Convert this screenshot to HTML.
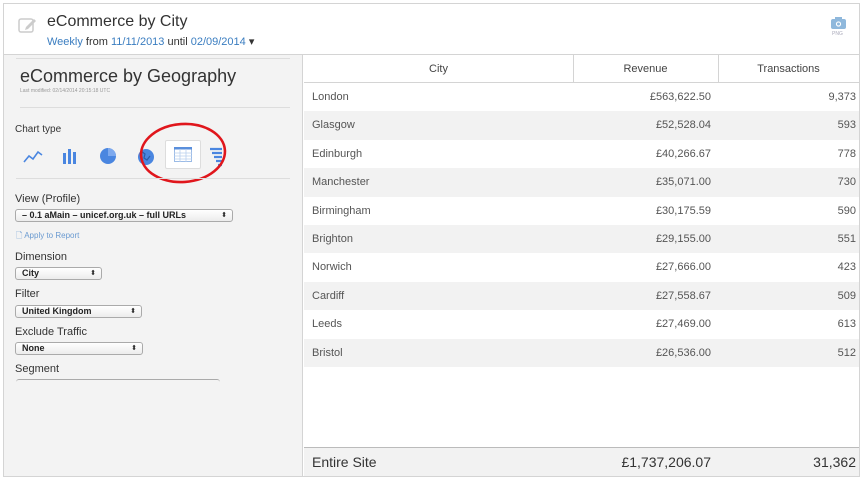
<!DOCTYPE html>
<html><head><meta charset="utf-8"><style>
*{margin:0;padding:0;box-sizing:border-box}
body{width:864px;height:481px;background:#fff;font-family:"Liberation Sans",sans-serif;position:relative;overflow:hidden;color:#333}
.frame{position:absolute;left:3px;top:3px;width:857px;height:474px;border:1px solid #d4d4d4;z-index:5;pointer-events:none}
.hdr{position:absolute;left:3px;top:3px;width:857px;height:52px;border-bottom:1px solid #d4d4d4}
.left{position:absolute;left:4px;top:55px;width:299px;height:421px;background:#f3f3f3;border-right:1px solid #d4d4d4}
.a{position:absolute;white-space:nowrap}
.blue{color:#3a7dc0}
.sel{position:absolute;height:13px;border:1px solid #aaa;border-radius:3px;background:linear-gradient(#fff,#ececec);font-size:9px;color:#222;padding-left:6px;line-height:11px;font-weight:bold}
.sel:after{content:"⬍";position:absolute;right:5px;top:0;font-size:7px;font-weight:normal}
.row{position:absolute;left:304px;width:555px;height:28.4px;font-size:11px;color:#555}
.row.g{background:#f2f2f2}
.row span{position:absolute;top:8px}
.c1{left:8px}.c2{right:148px}.c3{right:3px}
.th{position:absolute;top:55px;height:28px;font-size:11px;color:#444;text-align:center;line-height:28px;border-bottom:1px solid #d4d4d4;border-right:1px solid #d4d4d4}
</style></head><body>
<div class="frame"></div>
<div class="hdr"></div>
<svg class="a" style="left:18px;top:16px" width="20" height="18" viewBox="0 0 20 18"><rect x="1" y="3" width="14" height="13" rx="2" fill="none" stroke="#ccc" stroke-width="1.5"/><path d="M8 11l8-8 2 2-8 8-3 1z" fill="#ccc"/></svg>
<div class="a" style="left:47px;top:13px;font-size:16px;color:#333">eCommerce by City</div>
<div class="a" style="left:47px;top:35px;font-size:11px;color:#333"><span class="blue">Weekly</span> from <span class="blue">11/11/2013</span> until <span class="blue">02/09/2014</span> ▾</div>
<svg class="a" style="left:831px;top:17px" width="15" height="12" viewBox="0 0 15 12"><rect x="0" y="2" width="15" height="10" rx="2" fill="#8fb8dc"/><rect x="4" y="0" width="7" height="3" fill="#8fb8dc"/><circle cx="7.5" cy="7" r="2.6" fill="#fff"/><circle cx="7.5" cy="7" r="1.5" fill="#8fb8dc"/></svg>
<div class="a" style="left:832px;top:31px;font-size:5px;color:#aab">PNG</div>

<div class="left"></div>
<div class="a" style="left:16px;top:58px;width:274px;border-top:1px solid #ddd"></div>
<div class="a" style="left:20px;top:66px;font-size:18px;color:#333">eCommerce by Geography</div>
<div class="a" style="left:20px;top:88px;font-size:5px;color:#999">Last modified: 02/14/2014 20:15:18 UTC</div>
<div class="a" style="left:20px;top:107px;width:270px;border-top:1px solid #ddd"></div>
<div class="a" style="left:15px;top:124px;font-size:10px;color:#333">Chart type</div>
<svg class="a" style="left:22px;top:146px" width="210" height="22" viewBox="0 0 210 22">
<path d="M2 16l5-6 4 3 5-7 4 3" fill="none" stroke="#4a86e0" stroke-width="1.6"/>
<rect x="41" y="7" width="3" height="11" fill="#4a86e0"/><rect x="46" y="3" width="3" height="15" fill="#4a86e0"/><rect x="51" y="6" width="3" height="12" fill="#4a86e0"/>
<circle cx="86" cy="10" r="8" fill="#4a86e0"/><path d="M86 2v8h8a8 8 0 0 0-8-8z" fill="#7da9ee"/>
<circle cx="124" cy="11" r="8" fill="#4a86e0"/><path d="M119 5l4 3-1 4 3 2 3-4" fill="none" stroke="#2c5ca8" stroke-width="1.2"/>
<path d="M188 3h12M190 7h10M192 11h8M194 15h6M196 19h4" stroke="#4a86e0" stroke-width="2.2"/>
</svg>
<div class="a" style="left:165px;top:140px;width:36px;height:29px;background:#fff;border:1px solid #ddd;border-radius:2px"></div>
<svg class="a" style="left:174px;top:147px" width="18" height="15" viewBox="0 0 18 15"><rect x="0.5" y="0.5" width="17" height="14" fill="none" stroke="#9bbbe6"/><rect x="0" y="0" width="18" height="2.5" fill="#5a8fdc"/><path d="M0 6h18M0 9h18M0 12h18M6 2v13M12 2v13" stroke="#b9cfee" stroke-width="0.8"/></svg>
<svg class="a" style="left:138px;top:122px" width="90" height="64" viewBox="0 0 90 64"><ellipse cx="45" cy="31" rx="42" ry="29" fill="none" stroke="#e0161c" stroke-width="2.6" transform="rotate(-4 45 31)"/></svg>
<div class="a" style="left:16px;top:178px;width:274px;border-top:1px solid #ddd"></div>
<div class="a" style="left:15px;top:193px;font-size:11px">View (Profile)</div>
<div class="sel" style="left:15px;top:209px;width:218px">– 0.1 aMain – unicef.org.uk – full URLs</div>
<div class="a blue" style="left:16px;top:230px;font-size:8px;color:#6a9ad0">🗋 Apply to Report</div>
<div class="a" style="left:15px;top:251px;font-size:11px">Dimension</div>
<div class="sel" style="left:15px;top:267px;width:87px">City</div>
<div class="a" style="left:15px;top:288px;font-size:11px">Filter</div>
<div class="sel" style="left:15px;top:305px;width:127px">United Kingdom</div>
<div class="a" style="left:15px;top:326px;font-size:11px">Exclude Traffic</div>
<div class="sel" style="left:15px;top:342px;width:128px">None</div>
<div class="a" style="left:15px;top:363px;font-size:11px">Segment</div>
<div class="a" style="left:16px;top:379px;width:204px;height:4px;border-top:1px solid #aaa;border-radius:3px 3px 0 0"></div>

<div class="th" style="left:304px;width:270px">City</div>
<div class="th" style="left:573px;width:146px">Revenue</div>
<div class="th" style="left:718px;width:141px;border-right:none">Transactions</div>

<div class="row" style="top:83px"><span class="c1">London</span><span class="c2">£563,622.50</span><span class="c3">9,373</span></div>
<div class="row g" style="top:111.4px"><span class="c1">Glasgow</span><span class="c2">£52,528.04</span><span class="c3">593</span></div>
<div class="row" style="top:139.8px"><span class="c1">Edinburgh</span><span class="c2">£40,266.67</span><span class="c3">778</span></div>
<div class="row g" style="top:168.2px"><span class="c1">Manchester</span><span class="c2">£35,071.00</span><span class="c3">730</span></div>
<div class="row" style="top:196.6px"><span class="c1">Birmingham</span><span class="c2">£30,175.59</span><span class="c3">590</span></div>
<div class="row g" style="top:225px"><span class="c1">Brighton</span><span class="c2">£29,155.00</span><span class="c3">551</span></div>
<div class="row" style="top:253.4px"><span class="c1">Norwich</span><span class="c2">£27,666.00</span><span class="c3">423</span></div>
<div class="row g" style="top:281.8px"><span class="c1">Cardiff</span><span class="c2">£27,558.67</span><span class="c3">509</span></div>
<div class="row" style="top:310.2px"><span class="c1">Leeds</span><span class="c2">£27,469.00</span><span class="c3">613</span></div>
<div class="row g" style="top:338.6px"><span class="c1">Bristol</span><span class="c2">£26,536.00</span><span class="c3">512</span></div>

<div class="row g" style="top:447px;height:29px;border-top:1px solid #bbb;font-size:14px;color:#333"><span class="c1" style="top:6px">Entire Site</span><span class="c2" style="top:6px">£1,737,206.07</span><span class="c3" style="top:6px">31,362</span></div>
</body></html>
